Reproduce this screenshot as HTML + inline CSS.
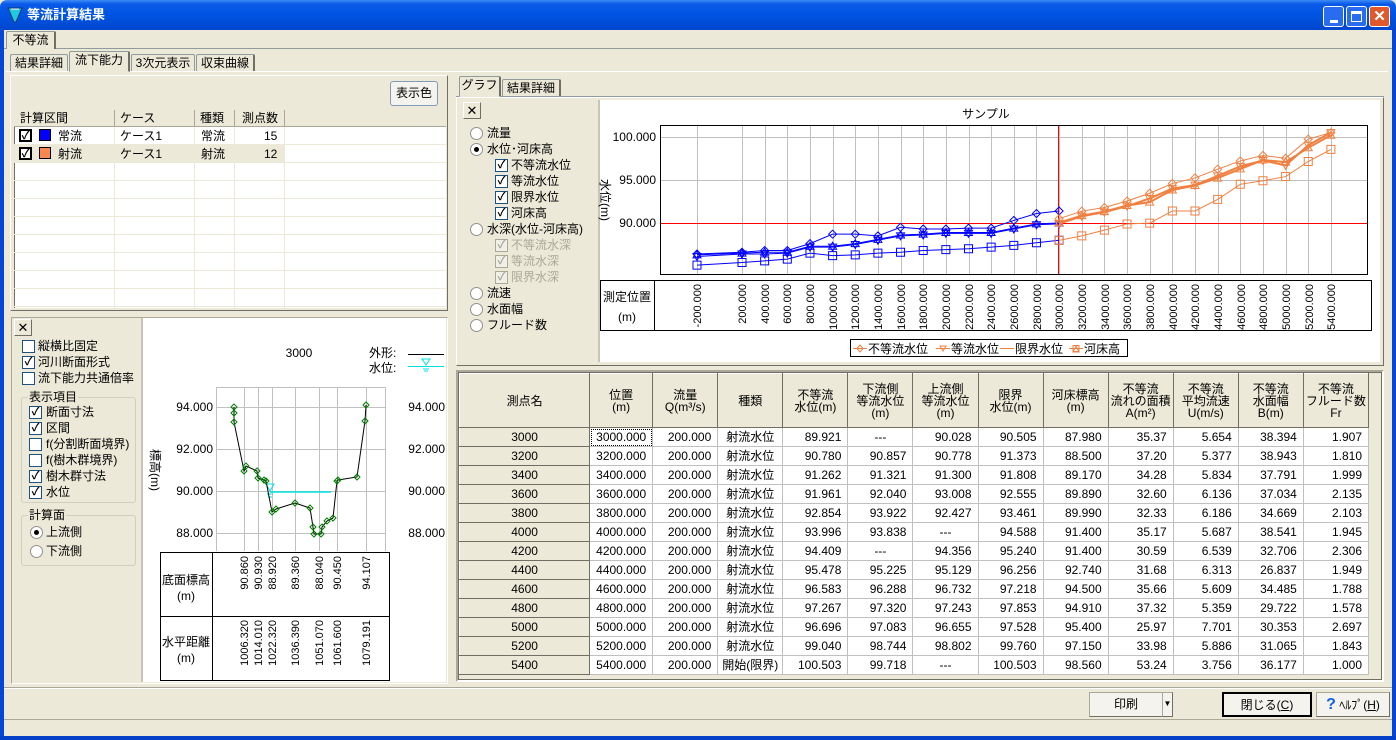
<!DOCTYPE html>
<html><head><meta charset="utf-8">
<style>
*{box-sizing:border-box;margin:0;padding:0}
body{width:1396px;height:740px;overflow:hidden;background:#ece9d8;font-family:"Liberation Sans","Noto Sans CJK JP",sans-serif;font-size:12px;color:#000;position:relative}
.a{position:absolute}
.t{position:absolute;white-space:nowrap;line-height:14px}
.tab{position:absolute;background:#ece9d8;border:1px solid #919b9c;border-bottom:none;text-align:center;line-height:16px;border-radius:2px 2px 0 0}
.sunk{border:1px solid;border-color:#aca899 #fff #fff #aca899}
.cb{position:absolute;width:13px;height:13px;border:1px solid #1c5180;background:#fff;font-size:11px;line-height:11px;text-align:center;font-weight:bold}
.cb.d{border-color:#aca899;color:#aca899;background:#f0efe8}
.rb{position:absolute;width:13px;height:13px;border:1px solid #909090;border-radius:50%;background:#fff}
.rb.on::after{content:"";position:absolute;left:3px;top:3px;width:5px;height:5px;border-radius:50%;background:#000}
.btn{position:absolute;background:#f4f3ee;border:1px solid #003c74;border-radius:3px;text-align:center}
.grp{position:absolute;border:1px solid #d0d0bf;border-radius:3px}
table{border-collapse:collapse;font-size:12px}
#tb td{height:19px;border:1px solid #c0c0c0;text-align:right;padding-right:6px;background:#fff;line-height:17px}
#tb td.n{background:#ece9d8;text-align:center;border:1px solid #fff;border-right-color:#716f64;border-bottom-color:#716f64;padding:0}
#tb td.c{text-align:center;padding:0}
#tb th{height:54px;font-weight:normal;background:#ece9d8;border:1px solid #fff;border-right-color:#716f64;border-bottom-color:#716f64;line-height:12px;font-size:12px}
</style></head><body>
<!-- title bar -->
<div class="a" style="left:0;top:0;width:1396px;height:30px;background:linear-gradient(#3d8cf5 0,#0a5ae8 4px,#0054e3 15px,#0048d0 28px);border-radius:7px 7px 0 0"></div>
<div class="a" style="left:0;top:30px;width:4px;height:710px;background:#0646d6"></div>
<div class="a" style="left:1392px;top:30px;width:4px;height:710px;background:#0646d6"></div>
<div class="a" style="left:0;top:736px;width:1396px;height:4px;background:#0440c8"></div>
<svg class="a" style="left:6px;top:6px" width="18" height="18"><path d="M2 2 L8 16 L10 16 L16 2 Z" fill="#20c8e0" stroke="#0a3a6a"/><path d="M5 3h8" stroke="#fff"/></svg>
<div class="t" style="left:27px;top:8px;color:#fff;font-weight:bold;font-size:13px">等流計算結果</div>
<div class="a" style="left:1323px;top:6px;width:21px;height:21px;border:1px solid #fff;border-radius:3px;background:#2a6cf0"><div class="a" style="left:6px;top:13px;width:8px;height:3px;background:#fff"></div></div>
<div class="a" style="left:1346px;top:6px;width:21px;height:21px;border:1px solid #fff;border-radius:3px;background:#2a6cf0"><div class="a" style="left:4px;top:4px;width:11px;height:11px;border:1px solid #fff;border-top-width:3px"></div></div>
<div class="a" style="left:1369px;top:6px;width:21px;height:21px;border:1px solid #fff;border-radius:3px;background:#e0582c;color:#fff;font-weight:bold;font-size:15px;text-align:center;line-height:19px">✕</div>

<!-- top tabs -->
<div class="a" style="left:4px;top:48px;width:1388px;height:1px;background:#919b9c"></div>
<div class="tab" style="left:6px;top:31px;width:50px;height:18px;border-right:2px solid #716f64">不等流</div>
<div class="a" style="left:6px;top:71px;width:1382px;height:1px;background:#fff"></div>
<div class="tab" style="left:10px;top:54px;width:58px;height:17px">結果詳細</div>
<div class="tab" style="left:69px;top:51px;width:61px;height:21px;border-right:2px solid #716f64;border-bottom:1px solid #ece9d8">流下能力</div>
<div class="tab" style="left:131px;top:54px;width:64px;height:17px">3次元表示</div>
<div class="tab" style="left:196px;top:54px;width:59px;height:17px;border-right:2px solid #716f64">収束曲線</div>

<!-- left top panel -->
<div class="a" style="left:10px;top:75px;width:438px;height:236px;border:1px solid;border-color:#fff #716f64 #716f64 #fff"></div>
<div class="btn" style="left:390px;top:81px;width:48px;height:25px;line-height:23px;border-color:#7f9db9">表示色</div>
<div class="a" style="left:14px;top:110px;width:432px;height:198px;background:#fff;border-left:1px solid #716f64"></div>
<div class="a" style="left:14px;top:110px;width:432px;height:17px;background:#ece9d8;border-bottom:1px solid #aca899"></div>
<div class="t" style="left:20px;top:111px">計算区間</div>
<div class="a" style="left:114px;top:110px;width:1px;height:17px;background:#aca899"></div>
<div class="t" style="left:120px;top:111px">ケース</div>
<div class="a" style="left:194px;top:110px;width:1px;height:17px;background:#aca899"></div>
<div class="t" style="left:200px;top:111px">種類</div>
<div class="a" style="left:234px;top:110px;width:1px;height:17px;background:#aca899"></div>
<div class="t" style="left:242px;top:111px">測点数</div>
<div class="a" style="left:284px;top:110px;width:1px;height:17px;background:#aca899"></div>
<div class="a" style="left:14px;top:145px;width:271px;height:17px;background:#ece9d8"></div>
<svg class="a" style="left:14px;top:127px" width="432" height="181">
<g stroke="#ece9d8"><path d="M0 17.5H432M0 35.5H432M0 53.5H432M0 71.5H432M0 89.5H432M0 107.5H432M0 125.5H432M0 143.5H432M0 161.5H432M0 179.5H432M100.5 0V181M180.5 0V181M220.5 0V181M270.5 0V181"/></g></svg>
<div class="cb" style="left:19px;top:129px;border:2px solid #000">✓</div>
<div class="a" style="left:39px;top:129px;width:12px;height:12px;background:#0000ff;border:1px solid #000"></div>
<div class="t" style="left:58px;top:129px">常流</div>
<div class="t" style="left:120px;top:129px">ケース1</div>
<div class="t" style="left:201px;top:129px">常流</div>
<div class="t" style="left:264px;top:129px">15</div>
<div class="cb" style="left:19px;top:147px;border:2px solid #000">✓</div>
<div class="a" style="left:39px;top:147px;width:12px;height:12px;background:#f88850;border:1px solid #000"></div>
<div class="t" style="left:58px;top:147px">射流</div>
<div class="t" style="left:120px;top:147px">ケース1</div>
<div class="t" style="left:201px;top:147px">射流</div>
<div class="t" style="left:264px;top:147px">12</div>

<!-- left bottom panel -->
<div class="a" style="left:11px;top:317px;width:437px;height:367px;border:1px solid;border-color:#aca899 #fff #fff #aca899"></div>
<div class="a" style="left:141px;top:318px;width:305px;height:364px;background:#fff;border-left:2px solid #c8c5b8"></div>
<div class="a" style="left:14px;top:319px;width:18px;height:17px;border:1px solid;border-color:#fff #716f64 #716f64 #fff;text-align:center;font-size:13px;line-height:15px">✕</div>
<div class="cb" style="left:22px;top:340px"></div><div class="t" style="left:38px;top:339px">縦横比固定</div>
<div class="cb" style="left:22px;top:356px">✓</div><div class="t" style="left:38px;top:355px">河川断面形式</div>
<div class="cb" style="left:22px;top:372px"></div><div class="t" style="left:38px;top:371px">流下能力共通倍率</div>
<div class="grp" style="left:21px;top:397px;width:115px;height:106px"></div>
<div class="t" style="left:28px;top:390px;background:#ece9d8;padding:0 1px">表示項目</div>
<div class="cb" style="left:29px;top:406px">✓</div><div class="t" style="left:46px;top:405px">断面寸法</div>
<div class="cb" style="left:29px;top:422px">✓</div><div class="t" style="left:46px;top:421px">区間</div>
<div class="cb" style="left:29px;top:438px"></div><div class="t" style="left:46px;top:437px">f(分割断面境界)</div>
<div class="cb" style="left:29px;top:454px"></div><div class="t" style="left:46px;top:453px">f(樹木群境界)</div>
<div class="cb" style="left:29px;top:470px">✓</div><div class="t" style="left:46px;top:469px">樹木群寸法</div>
<div class="cb" style="left:29px;top:486px">✓</div><div class="t" style="left:46px;top:485px">水位</div>
<div class="grp" style="left:21px;top:515px;width:115px;height:51px"></div>
<div class="t" style="left:28px;top:508px;background:#ece9d8;padding:0 1px">計算面</div>
<div class="rb on" style="left:30px;top:526px"></div><div class="t" style="left:46px;top:525px">上流側</div>
<div class="rb" style="left:30px;top:545px"></div><div class="t" style="left:46px;top:544px">下流側</div>

<svg class="a" style="left:0;top:0" width="450" height="690" font-family="Liberation Sans,Noto Sans CJK JP,sans-serif" font-size="12">
<g stroke="#c0c0c0"><path d="M216.5 387V551M244.5 387V551M258.5 387V551M272.5 387V551M295.5 387V551M319.5 387V551M337.5 387V551M366.5 387V551M385.5 387V551M216 387.5H386M216 407.5H386M216 449.5H386M216 491.5H386M216 533.5H386"/></g>
<text x="299" y="357" text-anchor="middle">3000</text>
<text x="369" y="357">外形:</text><text x="369" y="372">水位:</text>
<path d="M408 354.5H444" stroke="#000"/><path d="M408 366.5H444" stroke="#00e0e0"/>
<path d="M422 359L430 359L426 365Z M423 369h6M424 371h4" stroke="#00e0e0" fill="none"/>
<g text-anchor="end"><text x="213" y="411">94.000</text><text x="213" y="453">92.000</text><text x="213" y="495">90.000</text><text x="213" y="537">88.000</text>
<text x="445" y="411">94.000</text><text x="445" y="453">92.000</text><text x="445" y="495">90.000</text><text x="445" y="537">88.000</text></g>
<text transform="translate(151,470) rotate(90)" text-anchor="middle">標高(m)</text>
<path d="M270 492H331" stroke="#00e0e0" stroke-width="1.5"/>
<path d="M266 484L274 484L270 491Z M267 494h6M268 497h4" stroke="#00e0e0" fill="none"/>
<polyline id="xs" fill="none" stroke="#000" points="234,407 234,413 234,422 244,471 246,466 257,471 258,478 264,480 266,481 272,512 276,509 295,503 310,508 313,527 314,534 321,534 322,527 327,521 333,518 337,481 338,480 357,477 365,421 366,405"/>
<g id="xsm" fill="none" stroke="#008000"></g>
<rect x="160.5" y="552.5" width="229" height="128" fill="none" stroke="#000"/>
<path d="M212.5 552V681M160 616.5H390" stroke="#000"/>
<text x="186" y="584" text-anchor="middle">底面標高</text><text x="186" y="600" text-anchor="middle">(m)</text>
<text x="186" y="646" text-anchor="middle">水平距離</text><text x="186" y="662" text-anchor="middle">(m)</text>
<g font-size="11" text-anchor="end">
<text transform="translate(248,556) rotate(-90)">90.860</text>
<text transform="translate(262,556) rotate(-90)">90.930</text>
<text transform="translate(276,556) rotate(-90)">88.920</text>
<text transform="translate(299,556) rotate(-90)">89.360</text>
<text transform="translate(323,556) rotate(-90)">88.040</text>
<text transform="translate(341,556) rotate(-90)">90.450</text>
<text transform="translate(370,556) rotate(-90)">94.107</text>
<text transform="translate(248,620) rotate(-90)">1006.320</text>
<text transform="translate(262,620) rotate(-90)">1014.010</text>
<text transform="translate(276,620) rotate(-90)">1022.320</text>
<text transform="translate(299,620) rotate(-90)">1036.390</text>
<text transform="translate(323,620) rotate(-90)">1051.070</text>
<text transform="translate(341,620) rotate(-90)">1061.600</text>
<text transform="translate(370,620) rotate(-90)">1079.191</text>
</g>
</svg>

<!-- right panel tabs -->
<div class="a" style="left:456px;top:96px;width:928px;height:1px;background:#919b9c"></div>
<div class="tab" style="left:459px;top:76px;width:42px;height:21px;border-bottom:1px solid #ece9d8;border-right:2px solid #716f64">グラフ</div>
<div class="tab" style="left:502px;top:79px;width:59px;height:17px;border-right:2px solid #716f64">結果詳細</div>
<div class="a" style="left:456px;top:97px;width:928px;height:269px;border:1px solid;border-color:#fff #716f64 #716f64 #fff"></div>
<div class="a" style="left:598px;top:100px;width:782px;height:262px;background:#fff;border-left:2px solid #c8c5b8"></div>
<div class="a" style="left:463px;top:102px;width:18px;height:17px;border:1px solid;border-color:#fff #716f64 #716f64 #fff;text-align:center;font-size:13px;line-height:15px">✕</div>
<div class="rb" style="left:470px;top:127px"></div><div class="t" style="left:487px;top:126px">流量</div>
<div class="rb on" style="left:470px;top:143px"></div><div class="t" style="left:487px;top:142px">水位･河床高</div>
<div class="cb" style="left:495px;top:159px">✓</div><div class="t" style="left:511px;top:158px">不等流水位</div>
<div class="cb" style="left:495px;top:175px">✓</div><div class="t" style="left:511px;top:174px">等流水位</div>
<div class="cb" style="left:495px;top:191px">✓</div><div class="t" style="left:511px;top:190px">限界水位</div>
<div class="cb" style="left:495px;top:207px">✓</div><div class="t" style="left:511px;top:206px">河床高</div>
<div class="rb" style="left:470px;top:223px"></div><div class="t" style="left:487px;top:222px">水深(水位-河床高)</div>
<div class="cb d" style="left:495px;top:239px">✓</div><div class="t" style="left:511px;top:238px;color:#aca899">不等流水深</div>
<div class="cb d" style="left:495px;top:255px">✓</div><div class="t" style="left:511px;top:254px;color:#aca899">等流水深</div>
<div class="cb d" style="left:495px;top:271px">✓</div><div class="t" style="left:511px;top:270px;color:#aca899">限界水深</div>
<div class="rb" style="left:470px;top:287px"></div><div class="t" style="left:487px;top:286px">流速</div>
<div class="rb" style="left:470px;top:303px"></div><div class="t" style="left:487px;top:302px">水面幅</div>
<div class="rb" style="left:470px;top:319px"></div><div class="t" style="left:487px;top:318px">フルード数</div>

<svg class="a" style="left:0;top:0" width="1396" height="370" font-family="Liberation Sans,Noto Sans CJK JP,sans-serif" font-size="12">
<g id="grid" stroke="#c0c0c0"></g>
<path d="M660 223.5H1367M1058.5 125V274" stroke="#f00"/>
<rect x="660.5" y="125.5" width="707" height="149" fill="none" stroke="#000"/>
<text x="986" y="118" text-anchor="middle">サンプル</text>
<g text-anchor="end"><text x="656" y="141">100.000</text><text x="656" y="184">95.000</text><text x="656" y="227">90.000</text></g>
<text transform="translate(601,200) rotate(90)" text-anchor="middle">水位(m)</text>
<g id="ser"></g>
<rect x="600.5" y="280.5" width="771" height="50" fill="none" stroke="#000"/>
<path d="M654.5 281V330" stroke="#000"/>
<text x="627" y="301" text-anchor="middle">測定位置</text><text x="627" y="321" text-anchor="middle">(m)</text>
<g id="xl" font-size="11" text-anchor="end"></g>
<rect x="850.5" y="339.5" width="277" height="17" fill="none" stroke="#000"/>
<g stroke="#f08040" fill="none"><path d="M853 348.5H867M1000 348.5H1014M1069 348.5H1083M936 348.5H950"/>
<path d="M860 345L863 348.5L860 352L857 348.5Z"/><path d="M940 346L946 346L943 351Z"/><path d="M1073 352L1079 352L1076 346Z"/><rect x="1073" y="345.5" width="6" height="6"/></g>
<text x="868" y="353">不等流水位</text><text x="951" y="353">等流水位</text><text x="1015" y="353">限界水位</text><text x="1084" y="353">河床高</text>
<g font-size="11" text-anchor="end">
<text transform="translate(701,284) rotate(-90)">-200.000</text>
<text transform="translate(746,284) rotate(-90)">200.000</text>
<text transform="translate(769,284) rotate(-90)">400.000</text>
<text transform="translate(791,284) rotate(-90)">600.000</text>
<text transform="translate(814,284) rotate(-90)">800.000</text>
<text transform="translate(837,284) rotate(-90)">1000.000</text>
<text transform="translate(859,284) rotate(-90)">1200.000</text>
<text transform="translate(882,284) rotate(-90)">1400.000</text>
<text transform="translate(905,284) rotate(-90)">1600.000</text>
<text transform="translate(927,284) rotate(-90)">1800.000</text>
<text transform="translate(950,284) rotate(-90)">2000.000</text>
<text transform="translate(973,284) rotate(-90)">2200.000</text>
<text transform="translate(995,284) rotate(-90)">2400.000</text>
<text transform="translate(1018,284) rotate(-90)">2600.000</text>
<text transform="translate(1041,284) rotate(-90)">2800.000</text>
<text transform="translate(1063,284) rotate(-90)">3000.000</text>
<text transform="translate(1086,284) rotate(-90)">3200.000</text>
<text transform="translate(1109,284) rotate(-90)">3400.000</text>
<text transform="translate(1131,284) rotate(-90)">3600.000</text>
<text transform="translate(1154,284) rotate(-90)">3800.000</text>
<text transform="translate(1177,284) rotate(-90)">4000.000</text>
<text transform="translate(1199,284) rotate(-90)">4200.000</text>
<text transform="translate(1222,284) rotate(-90)">4400.000</text>
<text transform="translate(1245,284) rotate(-90)">4600.000</text>
<text transform="translate(1267,284) rotate(-90)">4800.000</text>
<text transform="translate(1290,284) rotate(-90)">5000.000</text>
<text transform="translate(1313,284) rotate(-90)">5200.000</text>
<text transform="translate(1335,284) rotate(-90)">5400.000</text>
</g>
</svg>

<!-- table -->
<div class="a" style="left:456px;top:370px;width:928px;height:312px;border:2px solid;border-color:#aca899 #fff #fff #aca899"></div>
<div class="a" style="left:458px;top:372px;width:924px;height:308px;background:#ece9d8;border:1px solid #716f64"></div>
<table id="tb" class="a" style="left:459px;top:373px;width:910px">
<tr><th style="width:130px">測点名</th><th style="width:63px">位置<br>(m)</th><th style="width:65px">流量<br>Q(m³/s)</th><th style="width:65px">種類</th><th style="width:65px">不等流<br>水位(m)</th><th style="width:65px">下流側<br>等流水位<br>(m)</th><th style="width:65px">上流側<br>等流水位<br>(m)</th><th style="width:65px">限界<br>水位(m)</th><th style="width:65px">河床標高<br>(m)</th><th style="width:65px">不等流<br>流れの面積<br>A(m²)</th><th style="width:65px">不等流<br>平均流速<br>U(m/s)</th><th style="width:65px">不等流<br>水面幅<br>B(m)</th><th style="width:65px">不等流<br>フルード数<br>Fr</th></tr>
<tr><td class="n">3000</td><td style="outline:1px dotted #000;outline-offset:-2px">3000.000</td><td>200.000</td><td class="c">射流水位</td><td>89.921</td><td class="c">---</td><td>90.028</td><td>90.505</td><td>87.980</td><td>35.37</td><td>5.654</td><td>38.394</td><td>1.907</td></tr>
<tr><td class="n">3200</td><td>3200.000</td><td>200.000</td><td class="c">射流水位</td><td>90.780</td><td>90.857</td><td>90.778</td><td>91.373</td><td>88.500</td><td>37.20</td><td>5.377</td><td>38.943</td><td>1.810</td></tr>
<tr><td class="n">3400</td><td>3400.000</td><td>200.000</td><td class="c">射流水位</td><td>91.262</td><td>91.321</td><td>91.300</td><td>91.808</td><td>89.170</td><td>34.28</td><td>5.834</td><td>37.791</td><td>1.999</td></tr>
<tr><td class="n">3600</td><td>3600.000</td><td>200.000</td><td class="c">射流水位</td><td>91.961</td><td>92.040</td><td>93.008</td><td>92.555</td><td>89.890</td><td>32.60</td><td>6.136</td><td>37.034</td><td>2.135</td></tr>
<tr><td class="n">3800</td><td>3800.000</td><td>200.000</td><td class="c">射流水位</td><td>92.854</td><td>93.922</td><td>92.427</td><td>93.461</td><td>89.990</td><td>32.33</td><td>6.186</td><td>34.669</td><td>2.103</td></tr>
<tr><td class="n">4000</td><td>4000.000</td><td>200.000</td><td class="c">射流水位</td><td>93.996</td><td>93.838</td><td class="c">---</td><td>94.588</td><td>91.400</td><td>35.17</td><td>5.687</td><td>38.541</td><td>1.945</td></tr>
<tr><td class="n">4200</td><td>4200.000</td><td>200.000</td><td class="c">射流水位</td><td>94.409</td><td class="c">---</td><td>94.356</td><td>95.240</td><td>91.400</td><td>30.59</td><td>6.539</td><td>32.706</td><td>2.306</td></tr>
<tr><td class="n">4400</td><td>4400.000</td><td>200.000</td><td class="c">射流水位</td><td>95.478</td><td>95.225</td><td>95.129</td><td>96.256</td><td>92.740</td><td>31.68</td><td>6.313</td><td>26.837</td><td>1.949</td></tr>
<tr><td class="n">4600</td><td>4600.000</td><td>200.000</td><td class="c">射流水位</td><td>96.583</td><td>96.288</td><td>96.732</td><td>97.218</td><td>94.500</td><td>35.66</td><td>5.609</td><td>34.485</td><td>1.788</td></tr>
<tr><td class="n">4800</td><td>4800.000</td><td>200.000</td><td class="c">射流水位</td><td>97.267</td><td>97.320</td><td>97.243</td><td>97.853</td><td>94.910</td><td>37.32</td><td>5.359</td><td>29.722</td><td>1.578</td></tr>
<tr><td class="n">5000</td><td>5000.000</td><td>200.000</td><td class="c">射流水位</td><td>96.696</td><td>97.083</td><td>96.655</td><td>97.528</td><td>95.400</td><td>25.97</td><td>7.701</td><td>30.353</td><td>2.697</td></tr>
<tr><td class="n">5200</td><td>5200.000</td><td>200.000</td><td class="c">射流水位</td><td>99.040</td><td>98.744</td><td>98.802</td><td>99.760</td><td>97.150</td><td>33.98</td><td>5.886</td><td>31.065</td><td>1.843</td></tr>
<tr><td class="n">5400</td><td>5400.000</td><td>200.000</td><td class="c">開始(限界)</td><td>100.503</td><td>99.718</td><td class="c">---</td><td>100.503</td><td>98.560</td><td>53.24</td><td>3.756</td><td>36.177</td><td>1.000</td></tr>
</table>

<!-- bottom -->
<div class="a" style="left:4px;top:687px;width:1388px;height:1px;background:#aca899"></div>
<div class="a" style="left:4px;top:688px;width:1388px;height:1px;background:#fff"></div>
<div class="btn" style="left:1089px;top:692px;width:74px;height:25px;line-height:23px;border-color:#aca899 #716f64 #716f64 #aca899;border-radius:0">印刷</div>
<div class="btn" style="left:1162px;top:692px;width:11px;height:25px;line-height:21px;font-size:8px;border-color:#aca899 #716f64 #716f64 #aca899;border-radius:0">▼</div>
<div class="btn" style="left:1222px;top:692px;width:90px;height:25px;line-height:23px;border:2px solid #000;border-radius:0">閉じる(<u>C</u>)</div>
<div class="btn" style="left:1316px;top:692px;width:74px;height:25px;line-height:23px;border-color:#aca899 #716f64 #716f64 #aca899;border-radius:0"><b style="color:#1060e0;font-size:16px">?</b> ﾍﾙﾌﾟ(<u>H</u>)</div>
<div class="a" style="left:4px;top:719px;width:1388px;height:1px;background:#aca899"></div>

<script>
(function(){
var NS="http://www.w3.org/2000/svg";
function X(p){return p<0?697:742+(p-200)*0.11325;}
function Y(v){return 223-(v-90)*8.6;}
var g=document.getElementById("grid"),d="";
var ps=[-200];for(var p=200;p<=5400;p+=200)ps.push(p);
ps.forEach(function(p){d+="M"+(Math.round(X(p))+.5)+" 125V274";});
d+="M660 137.5H1367M660 180.5H1367";
var e=document.createElementNS(NS,"path");e.setAttribute("d",d);g.appendChild(e);
var ser=document.getElementById("ser");
function mk(x,y,t,c){var s;
 if(t==0)s="M"+x+" "+(y-4)+"L"+(x+4)+" "+y+"L"+x+" "+(y+4)+"L"+(x-4)+" "+y+"Z";
 else if(t==1)s="M"+(x-4)+" "+(y-3)+"L"+(x+4)+" "+(y-3)+"L"+x+" "+(y+4)+"Z";
 else if(t==2)s="M"+(x-4)+" "+(y+3)+"L"+(x+4)+" "+(y+3)+"L"+x+" "+(y-4)+"Z";
 else s="M"+(x-4)+" "+(y-4)+"h8v8h-8Z";
 return s;}
function line(pp,vals,t,c,w){var pts=[],m="";
 for(var i=0;i<pp.length;i++){var x=X(pp[i]),y=Y(vals[i]);pts.push(x+","+y);m+=mk(x,y,t);}
 var pl=document.createElementNS(NS,"polyline");pl.setAttribute("points",pts.join(" "));pl.setAttribute("fill","none");pl.setAttribute("stroke",c);pl.setAttribute("stroke-width",w);ser.appendChild(pl);
 var pm=document.createElementNS(NS,"path");pm.setAttribute("d",m);pm.setAttribute("fill","none");pm.setAttribute("stroke",c);ser.appendChild(pm);}
var bp=[-200,200,400,600,800,1000,1200,1400,1600,1800,2000,2200,2400,2600,2800,3000];
line(bp,[86.4,86.6,86.8,86.8,87.6,88.7,88.7,88.5,89.5,89.3,89.3,89.4,89.4,90.3,91.1,91.4],0,"#0000ff",1);
line(bp,[86.1,86.4,86.4,86.5,87.2,87.2,87.5,88.0,88.5,88.6,88.8,88.8,88.8,89.3,89.8,89.9],1,"#0000ff",1);
line(bp,[86.3,86.5,86.6,86.6,87.3,87.3,87.6,88.1,88.6,88.7,88.9,88.9,88.9,89.4,89.9,90.0],2,"#0000ff",1);
line(bp,[85.1,85.4,85.6,85.8,86.5,86.2,86.3,86.5,86.6,86.8,86.9,87.0,87.2,87.4,87.7,88.0],3,"#0000ff",1);
var op=[3000,3200,3400,3600,3800,4000,4200,4400,4600,4800,5000,5200,5400];
line(op,[90.5,91.373,91.808,92.555,93.461,94.588,95.24,96.256,97.218,97.853,97.528,99.76,100.503],0,"#f08040",1);
line(op,[89.921,90.78,91.262,91.961,92.854,93.996,94.409,95.478,96.583,97.267,96.696,99.04,100.503],1,"#f08040",2);
line(op,[90.028,90.857,91.321,92.04,92.427,93.838,94.356,95.225,96.288,97.32,97.083,98.744,100.2],2,"#f08040",2);
line(op,[87.98,88.5,89.17,89.89,89.99,91.4,91.4,92.74,94.5,94.91,95.4,97.15,98.56],3,"#f08040",1);
var xs=document.getElementById("xsm"),m="";
document.getElementById("xs").getAttribute("points").split(" ").forEach(function(s){var a=s.split(",");var x=+a[0],y=+a[1];m+="M"+x+" "+(y-3)+"L"+(x+3)+" "+y+"L"+x+" "+(y+3)+"L"+(x-3)+" "+y+"Z";});
var q=document.createElementNS(NS,"path");q.setAttribute("d",m);xs.appendChild(q);
})();
</script>
</body></html>
